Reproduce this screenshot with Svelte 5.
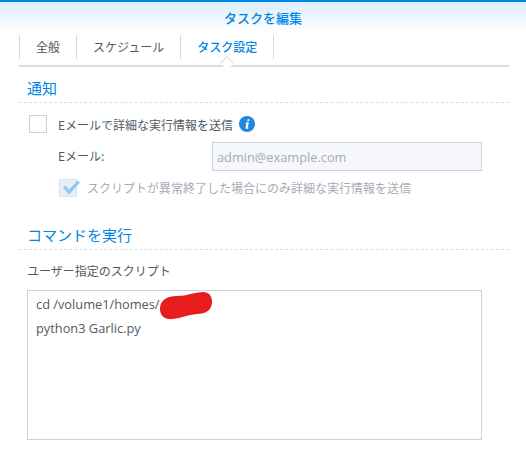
<script>
  const tabs = [
    { label: '全般', active: false },
    { label: 'スケジュール', active: false },
    { label: 'タスク設定', active: true }
  ];
  let script = 'cd /volume1/homes/\npython3 Garlic.py';
</script>

<div class="dialog">
  <div class="title">タスクを編集</div>

  <div class="tabs">
    {#each tabs as tab}
      <div class="tab" class:active={tab.active}>{tab.label}</div>
    {/each}
  </div>

  <div class="body">
    <h3 class="section">通知</h3>

    <div class="row check-row">
      <span class="box"></span>
      <span class="check-label">Eメールで詳細な実行情報を送信</span>
      <svg class="info" width="16" height="16" viewBox="0 0 16 16">
        <circle cx="8" cy="8" r="8" fill="#1e88e0" />
        <path d="M8.6 3.2h2l-.4 1.9h-2zM7.900 6.200h2l-1.100 5.100c-.1.400.2.500.8.300l-.2.900c-.6.300-1.300.400-1.900.300-.8-.1-1.100-.6-.9-1.400l.7-3.500-.7-.1.100-.5z" fill="#fff" />
      </svg>
    </div>

    <div class="row email-row">
      <label class="email-label" for="email">Eメール:</label>
      <input id="email" type="text" value="admin@example.com" disabled />
    </div>

    <div class="row sub-check">
      <span class="box disabled">
        <svg width="22" height="18" viewBox="0 0 22 18">
          <path d="M3 8.500l2.500-2 3.500 4L17.500 1.500 20 3.500 9 15.500z" fill="#8fc8f0" />
        </svg>
      </span>
      <span class="sub-label">スクリプトが異常終了した場合にのみ詳細な実行情報を送信</span>
    </div>

    <h3 class="section second">コマンドを実行</h3>

    <div class="script-label">ユーザー指定のスクリプト</div>

    <div class="script-wrap">
      <textarea spellcheck="false" bind:value={script}></textarea>
      <!-- redacted user name -->
      <svg class="scribble" width="54" height="28" viewBox="0 0 54 28">
        <path d="M1 17C1 8 8 4 18 4 28 4 36 0 44 0c6 0 9 4 9 10 0 8-6 12-15 12-10 1-16 4-24 5C6 28 1 24 1 17z" fill="#e81c1c" />
      </svg>
    </div>
  </div>
</div>

<style>
  :global(body) {
    margin: 0;
    background: #fff;
  }

  .dialog {
    width: 526px;
    height: 454px;
    overflow: hidden;
    box-sizing: border-box;
    font-family: "Noto Sans CJK JP", "Open Sans", sans-serif;
    font-size: 12px;
    color: #505a64;
  }

  .title {
    height: 31px;
    border-top: 2px solid #0086e5;
    background: linear-gradient(#dbedfc, #fff);
    color: #0086e5;
    font-size: 13px;
    font-weight: 500;
    line-height: 31px;
    text-align: center;
  }

  .tabs {
    display: flex;
    height: 24px;
    margin: 2px 17px 0 19px;
    padding-bottom: 6px;
    border-bottom: 2px solid #dcdcdc;
    position: relative;
  }

  .tab {
    padding: 0 16px;
    border-left: 1px solid #d2dae2;
    line-height: 24px;
    white-space: nowrap;
  }

  .tab:last-child {
    border-right: 1px solid #d2dae2;
  }

  .tab.active {
    color: #0086e5;
    font-weight: 500;
    position: relative;
  }

  .tab.active::after {
    content: "";
    position: absolute;
    left: 50%;
    bottom: -9px;
    width: 9px;
    height: 9px;
    margin-left: -5px;
    background: #fff;
    border-top: 1px solid #dcdcdc;
    border-left: 1px solid #dcdcdc;
    transform: rotate(45deg);
  }

  .body {
    margin: 0 17px 0 19px;
  }

  .section {
    margin: 0;
    height: 36px;
    padding: 10px 0 0 8px;
    box-sizing: border-box;
    border-bottom: 1px dashed #d4e2ee;
    color: #0086e5;
    font-size: 15px;
    font-weight: 400;
    line-height: 21px;
  }

  .section.second {
    height: 30px;
    margin-top: 23px;
    padding-top: 5px;
    line-height: 20px;
  }

  .row {
    display: flex;
    align-items: center;
  }

  .check-row {
    margin: 12px 0 0 10px;
    height: 18px;
  }

  .box {
    flex: none;
    width: 18px;
    height: 18px;
    box-sizing: border-box;
    border: 1px solid #c8d2dc;
    background: #fff;
    position: relative;
  }

  .box.disabled {
    background: #e8eff6;
    border-color: #d8e2ec;
  }

  .box svg {
    position: absolute;
    left: 0;
    top: -1px;
  }

  .check-label {
    margin-left: 11px;
  }

  .info {
    margin-left: 6px;
  }

  .email-row {
    margin: 9px 0 0 39px;
    height: 29px;
  }

  .email-label {
    width: 154px;
    padding-bottom: 2px;
  }

  input {
    width: 270px;
    height: 29px;
    box-sizing: border-box;
    padding: 0 4px;
    border: 1px solid #c8d2dc;
    background: #f5f7fa;
    color: #a4acb6;
    font-family: "Open Sans", sans-serif;
    font-size: 12.8px;
  }

  .sub-check {
    margin: 8px 0 0 40px;
    height: 18px;
  }

  .sub-label {
    margin-left: 10px;
    padding-bottom: 2px;
    color: #a4acb6;
    white-space: nowrap;
  }

  .script-label {
    margin: 11px 0 0 8px;
    height: 19px;
    line-height: 19px;
  }

  .script-wrap {
    position: relative;
    width: 455px;
    height: 150px;
    margin: 10px 0 0 8px;
  }

  textarea {
    display: block;
    width: 100%;
    height: 100%;
    box-sizing: border-box;
    margin: 0;
    padding: 1px 8px;
    border: 1px solid #c8d2dc;
    outline: none;
    resize: none;
    color: #505a64;
    font-family: "Open Sans", sans-serif;
    font-size: 12.8px;
    line-height: 24px;
  }

  .scribble {
    position: absolute;
    left: 132px;
    top: 2px;
  }
</style>
